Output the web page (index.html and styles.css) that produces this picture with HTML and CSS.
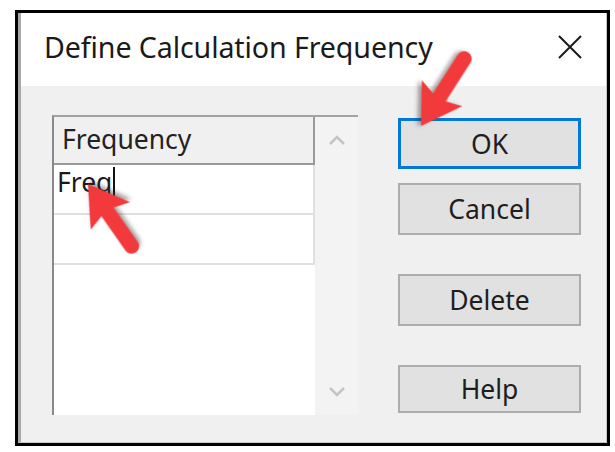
FILE: index.html
```html
<!DOCTYPE html>
<html>
<head>
<meta charset="utf-8">
<link rel="stylesheet" href="styles.css">
</head>
<body>
<div class="frame">
  <div class="dialog">
    <div class="titlebar">
      <span class="title">Define Calculation Frequency</span>
      <svg class="close" width="24" height="24" viewBox="0 0 24 24"><path d="M1 1 L23 23 M23 1 L1 23" stroke="#1a1a1a" stroke-width="2" fill="none"/></svg>
    </div>
    <div class="content">
      <div class="listbox">
        <div class="list-col">
          <div class="header">Frequency</div>
          <div class="row"><span class="cell-text">Freq</span><span class="caret"></span></div>
          <div class="row"></div>
          <div class="list-empty"></div>
        </div>
        <div class="scroll">
          <svg width="18" height="12" viewBox="0 0 18 12"><path d="M2 10 L9 3 L16 10" stroke="#c4c4c4" stroke-width="2.5" fill="none"/></svg>
          <svg width="18" height="12" viewBox="0 0 18 12"><path d="M2 2 L9 9 L16 2" stroke="#c4c4c4" stroke-width="2.5" fill="none"/></svg>
        </div>
      </div>
      <div class="buttons">
        <div class="btn btn-ok">OK</div>
        <div class="btn btn-cancel">Cancel</div>
        <div class="btn btn-delete">Delete</div>
        <div class="btn btn-help">Help</div>
      </div>
    </div>
  </div>
</div>
<svg class="arrows" width="615" height="452" viewBox="0 0 615 452">
  <g transform="translate(421 126) rotate(122.7) translate(-80 0)">
    <path class="arrow" d="M0 -7.5 L46 -7.5 L41 -24 L80 0 L41 24 L46 7.5 L0 7.5 A7.5 7.5 0 0 1 0 -7.5 Z"/>
  </g>
  <g transform="translate(88 184) rotate(-125) translate(-76 0)">
    <path class="arrow" d="M0 -7.5 L42 -7.5 L37 -24 L76 0 L37 24 L42 7.5 L0 7.5 A7.5 7.5 0 0 1 0 -7.5 Z"/>
  </g>
</svg>
</body>
</html>
```
FILE: styles.css
```css
html, body {
  margin: 0;
  padding: 0;
  background: #ffffff;
}
body {
  width: 615px;
  height: 452px;
  position: relative;
  font-family: "Noto Sans", "Open Sans", sans-serif;
  color: #1a1a1a;
}
.frame {
  position: absolute;
  left: 15px;
  top: 10px;
  width: 589px;
  height: 430px;
  border: 3px solid #000;
}
.dialog {
  height: 100%;
  border-left: 3px solid #a9a9a9;
  border-right: 1px solid #c8c8c8;
  border-bottom: 1px solid #c8c8c8;
  display: flex;
  flex-direction: column;
  box-sizing: border-box;
}
.titlebar {
  height: 73px;
  background: #fff;
  display: flex;
  align-items: center;
  justify-content: space-between;
  padding: 0 24px 0 23px;
  flex: none;
}
.title {
  font-size: 28.6px;
  letter-spacing: -0.1px;
  margin-top: -6px;
}
.close {
  margin-top: -5px;
}
.content {
  flex: 1;
  background: #f0f0f0;
  display: flex;
  padding: 29px 0 0 31px;
  gap: 40px;
}
.listbox {
  width: 306px;
  height: 300px;
  display: flex;
  border-top: 2px solid #a3a3a3;
  border-left: 2px solid #8a8a8a;
  box-sizing: border-box;
}
.list-col {
  width: 261px;
  display: flex;
  flex-direction: column;
  background: #fff;
}
.header {
  height: 48px;
  box-sizing: border-box;
  background: #f0f0f0;
  border-bottom: 2px solid #9a9a9a;
  border-right: 2px solid #9a9a9a;
  font-size: 26.5px;
  line-height: 36px;
  padding: 4px 0 0 8px;
  color: #222;
}
.row {
  height: 50px;
  box-sizing: border-box;
  border-bottom: 2px solid #e0e0e0;
  border-right: 2px solid #e0e0e0;
  display: flex;
  align-items: flex-start;
  font-size: 26.5px;
  padding: 2px 0 0 3px;
}
.cell-text {
  line-height: 30px;
}
.caret {
  width: 2px;
  height: 30px;
  background: #111;
  margin-left: 1px;
}
.list-empty {
  flex: 1;
}
.scroll {
  flex: 1;
  background: #f3f3f3;
  display: flex;
  flex-direction: column;
  justify-content: space-between;
  align-items: center;
  padding: 17px 0 17px 0;
}
.buttons {
  width: 183px;
  display: flex;
  flex-direction: column;
  padding-top: 3px;
}
.btn {
  box-sizing: border-box;
  background: #e1e1e1;
  border: 2px solid #adadad;
  font-size: 26.5px;
  display: flex;
  align-items: center;
  justify-content: center;
  color: #1e1e1e;
}
.btn-ok {
  height: 51px;
  border: 3px solid #0078d7;
}
.btn-cancel {
  height: 52px;
  margin-top: 14px;
}
.btn-delete {
  height: 52px;
  margin-top: 39px;
}
.btn-help {
  height: 48px;
  margin-top: 39px;
}
.arrows {
  position: absolute;
  left: 0;
  top: 0;
  pointer-events: none;
}
.arrow {
  fill: #f23a3d;
  filter: drop-shadow(2px 3px 2px rgba(60, 40, 40, 0.45));
}
```
